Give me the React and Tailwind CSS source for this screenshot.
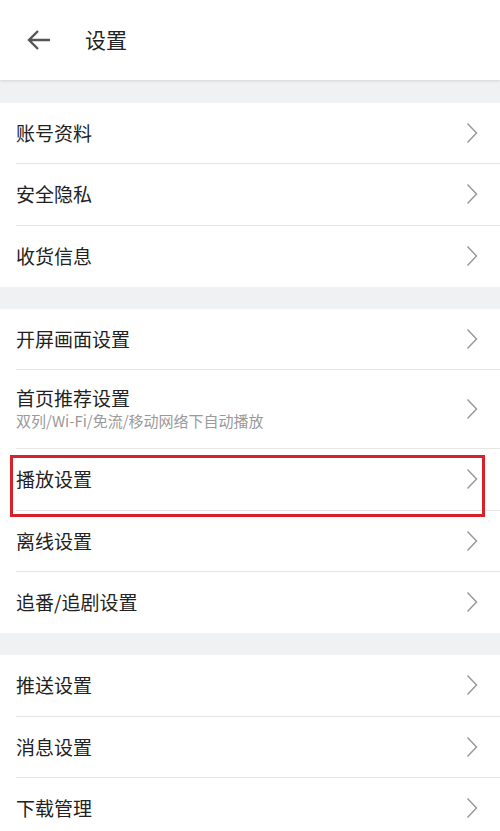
import React from 'react';

const FONT = { fontFamily: '"Noto Sans CJK SC", "Noto Sans", sans-serif' };

const GROUPS = [
  [{ title: '账号资料' }, { title: '安全隐私' }, { title: '收货信息' }],
  [
    { title: '开屏画面设置' },
    { title: '首页推荐设置', sub: '双列/Wi-Fi/免流/移动网络下自动播放' },
    { title: '播放设置', marked: true },
    { title: '离线设置' },
    { title: '追番/追剧设置' },
  ],
  [{ title: '推送设置' }, { title: '消息设置' }, { title: '下载管理' }],
];

const Chevron = () => (
  <svg width="12" height="22" viewBox="0 0 12 22" fill="none" className="shrink-0">
    <path d="M1.5 1.5 L10.5 11 L1.5 20.5" stroke="#9a9a9a" strokeWidth="1.5" strokeLinejoin="miter" />
  </svg>
);

const BackArrow = () => (
  <svg width="24" height="22" viewBox="0 0 24 22" fill="none">
    <path d="M23 11 H3 M11 2 L2 11 L11 20" stroke="#555" strokeWidth="2.4" />
  </svg>
);

const Row = ({ title, sub, marked, last }) => (
  <div className={`relative flex flex-col ${sub ? 'h-[79px]' : 'h-[61.33px]'}`}>
    <div className="flex-1 flex items-center pl-4 pr-[22px]">
      <div className="flex-1 min-w-0">
        <p className="text-[19px] leading-[24px] text-[#222]">{title}</p>
        {sub && <p className="text-[15px] leading-[22px] text-[#9a9a9a]">{sub}</p>}
      </div>
      <Chevron />
    </div>
    <div className={`ml-4 h-px ${last ? 'bg-white' : 'bg-[#e6e6e6]'}`} />
    {marked && (
      <div className="absolute left-[10px] right-[15px] top-[6px] h-[62px] border-[3px] border-[#d8222b] pointer-events-none" />
    )}
  </div>
);

export default function App() {
  return (
    <div className="w-[500px] h-[831px] overflow-hidden bg-[#f0f1f3]" style={FONT}>
      <header className="h-[80px] bg-white flex items-center pl-[27px] gap-[34px] shadow-[0_1px_3px_rgba(0,0,0,0.12)] relative z-10">
        <BackArrow />
        <h1 className="text-[21px] text-[#222]">设置</h1>
      </header>
      {GROUPS.map((group, gi) => (
        <div key={gi} className={`${gi === 0 ? 'mt-[23px]' : 'mt-[22px]'} bg-white`}>
          {group.map((item, i) => (
            <Row key={item.title} {...item} last={i === group.length - 1} />
          ))}
        </div>
      ))}
    </div>
  );
}
